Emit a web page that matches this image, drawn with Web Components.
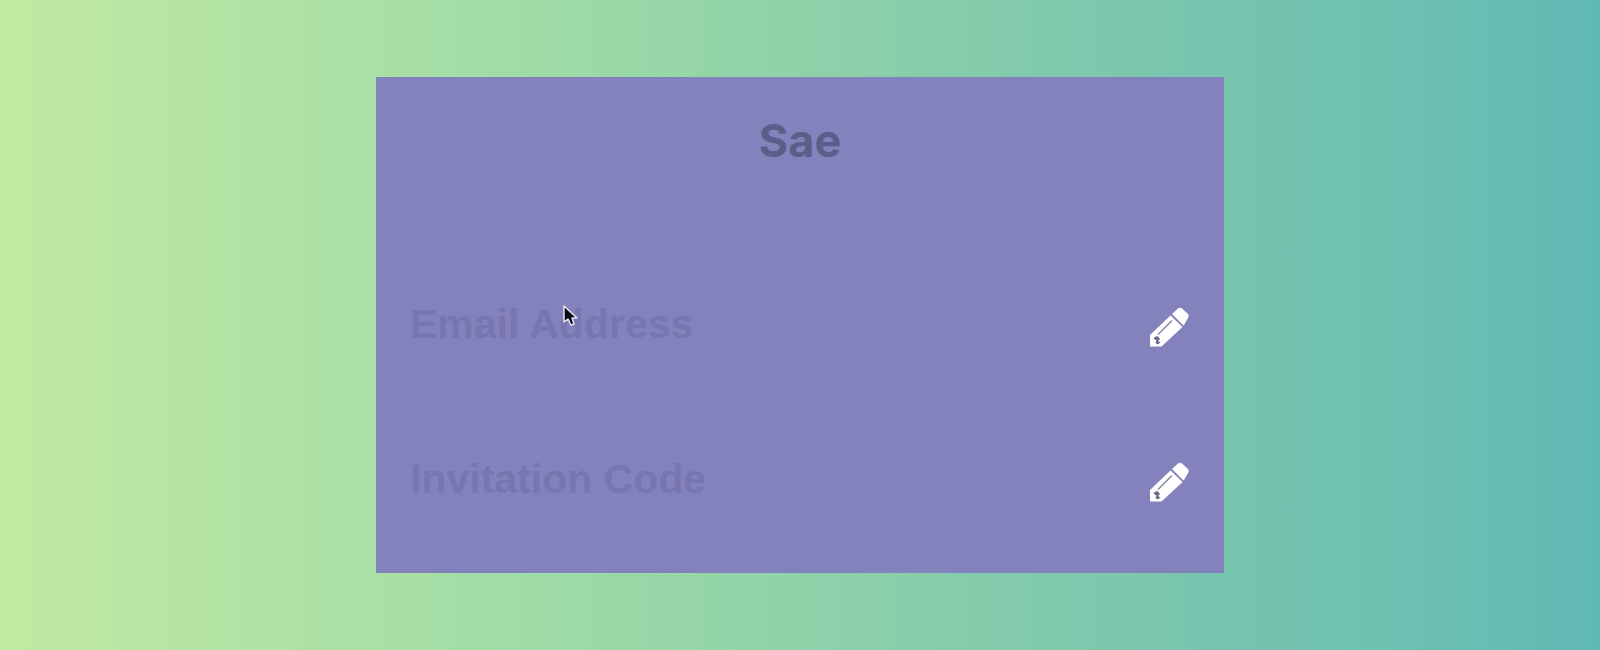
<!DOCTYPE html>
<html lang="en">
<head>
  <meta charset="utf-8">
  <meta name="viewport" content="width=device-width, initial-scale=1">
  <title>Sae</title>
  <style>
    body {
      margin: 0;
      font-family: "Liberation Sans", Arial, sans-serif;
    }
  </style>
</head>
<body>
  <demo-stage>
    <sae-card heading="Sae">
      <sae-field name="email" type="email">Email Address</sae-field>
      <sae-field name="code" type="text">Invitation Code</sae-field>
      <mouse-pointer slot="pointer"></mouse-pointer>
    </sae-card>
  </demo-stage>

  <script>
    class DemoStage extends HTMLElement {
      constructor() {
        super()
        this.attachShadow({ mode: "open" })
      }

      connectedCallback() {
        this.shadowRoot.innerHTML = `
          <style>
            :host {
              display: flex;
              align-items: center;
              justify-content: center;
              min-height: 100vh;
              background: linear-gradient(to right, #c1eaa1 0%, #b2e3a4 15%, #9edba6 34%, #7dc7ad 69%, #6abfb2 91%, #60b8b4 100%);
            }
          </style>
          <slot></slot>
        `
      }
    }

    class SaeCard extends HTMLElement {
      constructor() {
        super()
        this.attachShadow({ mode: "open" })
      }

      static get styles() {
        return `
          :host {
            display: block;
            width: 53%;
            box-sizing: border-box;
            position: relative;
            padding: 32px 34px 15px;
            background-color: #8482bc;
          }

          .card__title {
            margin: 0 0 75px;
            color: #595f89;
            font: bold 45px/64px Inter, "Liberation Sans", sans-serif;
            text-align: center;
          }

          .card__form {
            display: flex;
            flex-direction: column;
          }
        `
      }

      connectedCallback() {
        this.shadowRoot.innerHTML = `
          <style>${SaeCard.styles}</style>
          <h2 class="card__title">${this.getAttribute("heading")}</h2>
          <form class="card__form">
            <slot></slot>
          </form>
          <slot name="pointer"></slot>
        `
      }
    }

    class SaeField extends HTMLElement {
      constructor() {
        super()
        this.attachShadow({ mode: "open" })
      }

      static get styles() {
        return `
          :host {
            display: flex;
            align-items: center;
            height: 155px;
          }

          /* label and input share one cell, the label lies over the empty input */
          .field__box {
            flex: 1;
            display: grid;
            align-items: center;
            padding-bottom: 4px;
          }

          .field__label,
          .field__input {
            grid-area: 1 / 1;
            font: bold 41px/48px "Liberation Sans", Arial, sans-serif;
          }

          .field__label {
            color: #7876b0;
            pointer-events: none;
            z-index: 1;
          }

          .field__input {
            width: 100%;
            box-sizing: border-box;
            padding: 0;
            border: none;
            outline: none;
            background: none;
            color: #fff;
          }

          .field__input:focus {
            box-shadow: 0 2px #fff;
          }

          .field__input:focus + .field__label,
          .field__input:not(:placeholder-shown) + .field__label {
            align-self: start;
            margin-top: -32px;
            font-size: 24px;
          }

          .field__icon {
            width: 44px;
            height: 44px;
            flex: none;
          }
        `
      }

      connectedCallback() {
        this.shadowRoot.innerHTML = `
          <style>${SaeField.styles}</style>
          <div class="field__box">
            <input class="field__input" id="input" name="${this.getAttribute("name")}" type="${this.getAttribute("type")}" placeholder=" ">
            <label class="field__label" for="input"><slot></slot></label>
          </div>
          <svg class="field__icon" viewBox="0 0 44 44" aria-hidden="true">
            <path fill="#fff" d="M4 31 24.500 11.500 36.500 23 15.500 42.500H4Z"/>
            <path fill="#fff" d="M26 10 32 4.500Q34 3 36 4.500L42 10Q43.500 12 42 14L38 21Q37.500 21.500 37 21Z"/>
            <path fill="none" stroke="#8583ad" stroke-width="1.500" d="M12 30.500 26 16.500"/>
            <path fill="#68688f" d="M7.500 34.500Q9.500 31.500 12 32.500L14 35 12 37 14.500 38.500 11.500 40.500 9.500 39 10.500 36.500Z"/>
          </svg>
        `
      }
    }

    class MousePointer extends HTMLElement {
      constructor() {
        super()
        this.attachShadow({ mode: "open" })
      }

      connectedCallback() {
        this.shadowRoot.innerHTML = `
          <style>
            :host {
              display: block;
              position: absolute;
              left: 22%;
              top: 46%;
              z-index: 2;
              pointer-events: none;
            }

            svg {
              display: block;
              width: 16px;
              height: 22px;
            }
          </style>
          <svg viewBox="0 0 16 22" aria-hidden="true">
            <path fill="#080810" stroke="#e4e1f4" stroke-width="1.5" stroke-linejoin="round" d="M1 1V17L5 14 8 20 11 19 9 13H14Z"/>
          </svg>
        `
      }
    }

    customElements.define("demo-stage", DemoStage)
    customElements.define("sae-card", SaeCard)
    customElements.define("sae-field", SaeField)
    customElements.define("mouse-pointer", MousePointer)
  </script>
</body>
</html>
